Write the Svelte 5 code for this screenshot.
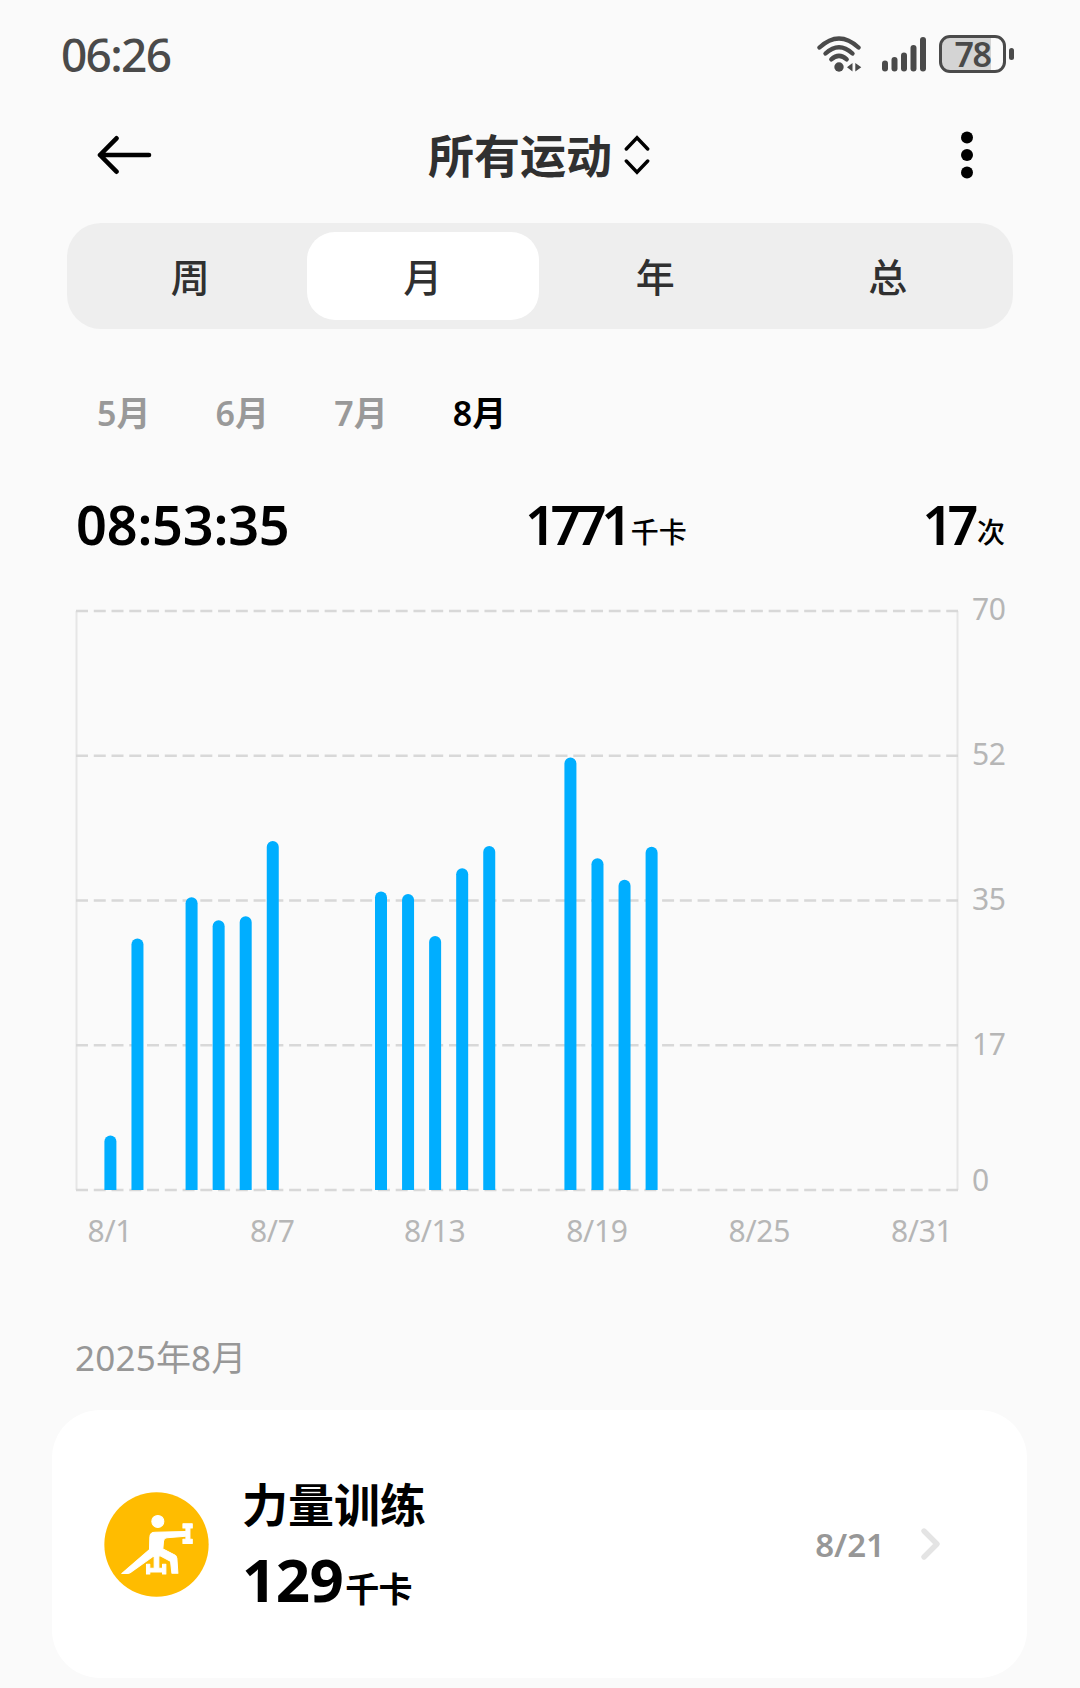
<script>
  const tabs = ['周', '月', '年', '总'];
  const months = ['5月', '6月', '7月', '8月'];

  let activeTab = $state('月');
  let activeMonth = $state('8月');

  // Plot area geometry
  const W = 960, H = 640;
  const LEFT = 1.5, RIGHT = 882.5;
  const TOP = 21, BOTTOM = 600;
  const MAX = 70;
  const FIRST = 35.4, STEP = 27.06, BAR = 12;

  // Minutes of exercise per day of the month
  const days = [
    { day: 1, min: 6.6 },
    { day: 2, min: 30.4 },
    { day: 4, min: 35.4 },
    { day: 5, min: 32.6 },
    { day: 6, min: 33.1 },
    { day: 7, min: 42.2 },
    { day: 11, min: 36.1 },
    { day: 12, min: 35.8 },
    { day: 13, min: 30.7 },
    { day: 14, min: 38.9 },
    { day: 15, min: 41.6 },
    { day: 18, min: 52.3 },
    { day: 19, min: 40.1 },
    { day: 20, min: 37.5 },
    { day: 21, min: 41.5 },
  ];

  const rows = [
    { label: '70', ly: 30 },
    { label: '52', ly: 175 },
    { label: '35', ly: 320 },
    { label: '17', ly: 465 },
    { label: '0', ly: 601 },
  ];
  const ticks = [1, 7, 13, 19, 25, 31];

  const cx = (day) => FIRST + (day - 1) * STEP;

  /** Bar outline: round top, square foot */
  function bar(d) {
    const x = cx(d.day) - BAR / 2;
    const y = BOTTOM - (d.min / MAX) * (BOTTOM - TOP);
    const r = BAR / 2;
    return `M${x} ${BOTTOM}V${y + r}a${r} ${r} 0 0 1 ${BAR} 0V${BOTTOM}z`;
  }

  const signal = [11, 14.5, 19, 26.5, 34.5];
</script>

<div class="screen">
  <div class="status">
    <span class="time">06:26</span>
    <div class="status-icons">
      <svg class="wifi" width="45" height="36" viewBox="0 0 45 36">
        <g fill="none" stroke="#4a4a4a" stroke-width="4.4" stroke-linecap="round">
          <path d="M2.500 11.500Q22 -6.500 41.500 11.500" />
          <path d="M8.500 17.500Q22 5 35.500 17.500" />
          <path d="M14.300 23.300Q22 16.500 29.700 23.300" />
        </g>
        <circle cx="22" cy="31" r="4.700" fill="#4a4a4a" />
        <path d="M35.500 27v8.500l-5.500-4.200zM38.300 27v8.500l6-4.200z" fill="#4a4a4a" />
      </svg>
      <svg class="signal" width="45" height="36" viewBox="0 0 45 36">
        {#each signal as h, i}
          <rect x={i * 9.5} y={35.5 - h} width="6" height={h} rx="3" fill="#4a4a4a" />
        {/each}
      </svg>
      <div class="battery">
        <span class="charge">78</span>
      </div>
      <i class="nub"></i>
    </div>
  </div>

  <header>
    <svg width="56" height="40" viewBox="0 0 56 40" fill="none" stroke="#000" stroke-width="4.6" stroke-linecap="round" stroke-linejoin="round">
      <path d="M52 20H3M19.500 3.300L3 20l16.500 16.700" />
    </svg>
    <h1>
      所有运动
      <svg width="26" height="40" viewBox="0 0 26 40" fill="none" stroke="#000" stroke-width="3.4" stroke-linecap="round">
        <path d="M2.300 14L13 2.800L23.700 14M2.300 26L13 37.200L23.700 26" />
      </svg>
    </h1>
    <svg width="14" height="50" viewBox="0 0 14 50">
      <circle cx="7" cy="7.500" r="6" />
      <circle cx="7" cy="25" r="6" />
      <circle cx="7" cy="42.500" r="6" />
    </svg>
  </header>

  <nav class="tabs">
    {#each tabs as tab}
      <button class:active={tab === activeTab} onclick={() => (activeTab = tab)}>{tab}</button>
    {/each}
  </nav>

  <div class="months">
    {#each months as m}
      <button class:active={m === activeMonth} onclick={() => (activeMonth = m)}>{m}</button>
    {/each}
  </div>

  <div class="totals">
    <div class="duration">08:53:35</div>
    <div class="kcal">1771<small>千卡</small></div>
    <div class="count">17<small>次</small></div>
  </div>

  <svg class="chart" width={W} height={H} viewBox="0 0 {W} {H}">
    <!-- Frame sides -->
    <line x1={LEFT} y1={TOP} x2={LEFT} y2={BOTTOM} stroke="#e6e6e6" stroke-width="2" />
    <line x1={RIGHT} y1={TOP} x2={RIGHT} y2={BOTTOM} stroke="#e6e6e6" stroke-width="2" />

    {#each rows as row, i}
      {@const y = TOP + (i * (BOTTOM - TOP)) / 4}
      <line x1="1" y1={y} x2={RIGHT + 0.5} y2={y} stroke="#d8d8d8" stroke-width="2.6" stroke-dasharray="12 5.76" />
      <text x="897" y={row.ly} class="axis">{row.label}</text>
    {/each}

    {#each days as d}
      <path d={bar(d)} fill="#00aeff" />
    {/each}

    {#each ticks as t}
      <text x={cx(t) - 0.5} y="652" class="axis" text-anchor="middle">8/{t}</text>
    {/each}
  </svg>

  <h2>2025年8月</h2>

  <section class="card">
    <svg class="sport" width="105" height="105" viewBox="44 36 314 314">
      <circle cx="201" cy="193" r="156" fill="#ffbc00" />
      <g fill="#fff" stroke="#fff" stroke-width="3" stroke-linejoin="round">
        <circle cx="205" cy="124" r="18" />
        <!-- left leg, torso, arm and right leg -->
        <path d="M181 172Q181 156 197 156L288 154V168L232 173Q223 174 222 183L220 206L255 224Q261 227 262 234L265 279H247L243 243L212 227L190 229L124 276Q119 280 113 280H97L180 208z" />
        <!-- raised dumbbell -->
        <path d="M280 131H308V144H301V177H308V190H280V177H289V144H280z" />
        <!-- dumbbell on the floor -->
        <path d="M194 222H208V264H219V252H229V281H219V275H181V281H171V252H181V264H194z" />
      </g>
    </svg>
    <div class="info">
      <div class="name">力量训练</div>
      <div class="burn">129<small>千卡</small></div>
    </div>
    <span class="date">8/21</span>
    <svg width="22" height="34" viewBox="0 0 22 34" fill="none" stroke="#e4e4e4" stroke-width="5.4" stroke-linecap="round" stroke-linejoin="round">
      <path d="M4 4L17 17L4 30" />
    </svg>
  </section>
</div>

<style>
  :global(body) {
    background: #fafafa;
  }

  .screen {
    box-sizing: border-box;
    width: 1080px;
    height: 1688px;
    overflow: hidden;
    background: #fafafa;
    color: #000;
    font-family: 'Noto Sans', 'Noto Sans CJK SC', sans-serif;
    display: flex;
    flex-direction: column;
  }

  .status {
    height: 108px;
    padding: 0 66px 0 61px;
    display: flex;
    align-items: center;
    justify-content: space-between;
    color: #4a4a4a;
  }

  .time {
    font-size: 46px;
    font-weight: 500;
    letter-spacing: -1.7px;
  }

  .status-icons {
    display: flex;
    align-items: center;
  }

  .signal {
    margin: 0 12px 0 20px;
  }

  .battery {
    box-sizing: border-box;
    width: 67px;
    height: 38px;
    border: 3px solid #4a4a4a;
    border-radius: 11px;
    background: linear-gradient(to right, #d4d4d4 49px, transparent 49px);
    display: flex;
    align-items: center;
    justify-content: center;
  }

  .charge {
    font-size: 34px;
    line-height: 32px;
    font-weight: 600;
    letter-spacing: -1.5px;
  }

  .nub {
    width: 5px;
    height: 12px;
    margin-left: 3px;
    border-radius: 3px;
    background: #4a4a4a;
  }

  header {
    height: 94px;
    padding: 0 106px 0 97px;
    display: flex;
    align-items: center;
    justify-content: space-between;
  }

  h1 {
    margin: 0 0 0 -35px;
    font-size: 46px;
    line-height: 60px;
    font-weight: 600;
    color: #303030;
    display: flex;
    align-items: center;
    gap: 12px;
  }

  .tabs {
    box-sizing: border-box;
    width: 946px;
    height: 106px;
    margin: 21px 0 0 67px;
    padding: 9px 9px 9px 7px;
    border-radius: 34px;
    background: #eee;
    display: flex;
  }

  button {
    border: 0;
    padding: 0;
    background: none;
    font-family: inherit;
  }

  .tabs button {
    flex: 1;
    padding-bottom: 3px;
    border-radius: 28px;
    font-size: 39px;
    font-weight: 500;
    color: #303030;
  }

  .tabs button.active {
    background: #fff;
  }

  .months {
    margin: 54px 0 0 97px;
    height: 56px;
    display: flex;
  }

  .months button {
    width: 118.6px;
    text-align: left;
    font-size: 34px;
    font-weight: 600;
    color: #999;
  }

  .months button.active {
    color: #000;
  }

  .totals {
    height: 80px;
    margin: 45px 75px 0 76px;
    display: flex;
    align-items: baseline;
    justify-content: space-between;
    font-size: 54px;
    line-height: 80px;
    font-weight: 600;
  }

  .totals small {
    margin-left: 4px;
    font-size: 28px;
    line-height: 1;
    font-weight: 500;
    letter-spacing: 0;
    vertical-align: 2px;
  }

  .duration {
    letter-spacing: -0.2px;
  }

  .kcal,
  .count {
    letter-spacing: -5.5px;
  }

  .chart {
    margin: 26px 0 0 75px;
    overflow: visible;
  }

  .axis {
    font-size: 30px;
    font-weight: 400;
    letter-spacing: -0.3px;
    fill: #b6b6b6;
  }

  h2 {
    margin: 98px 0 0 75px;
    font-size: 35px;
    line-height: 60px;
    font-weight: 400;
    letter-spacing: 0.2px;
    color: #979797;
  }

  .card {
    box-sizing: border-box;
    width: 975px;
    height: 268px;
    margin: 22px 0 0 52px;
    padding: 0 85px 0 52px;
    border-radius: 48px;
    background: #fff;
    display: flex;
    flex: none;
    align-items: center;
  }

  .info {
    flex: 1;
    margin-left: 33px;
  }

  .name {
    font-size: 46px;
    line-height: 70px;
    font-weight: 600;
  }

  .burn {
    font-size: 60px;
    line-height: 80px;
    font-weight: 700;
    letter-spacing: -0.6px;
  }

  .burn small {
    margin-left: 2px;
    font-size: 34px;
    line-height: 1;
    font-weight: 600;
  }

  .date {
    margin-right: 35px;
    font-size: 33px;
    font-weight: 600;
    color: #979797;
  }
</style>
